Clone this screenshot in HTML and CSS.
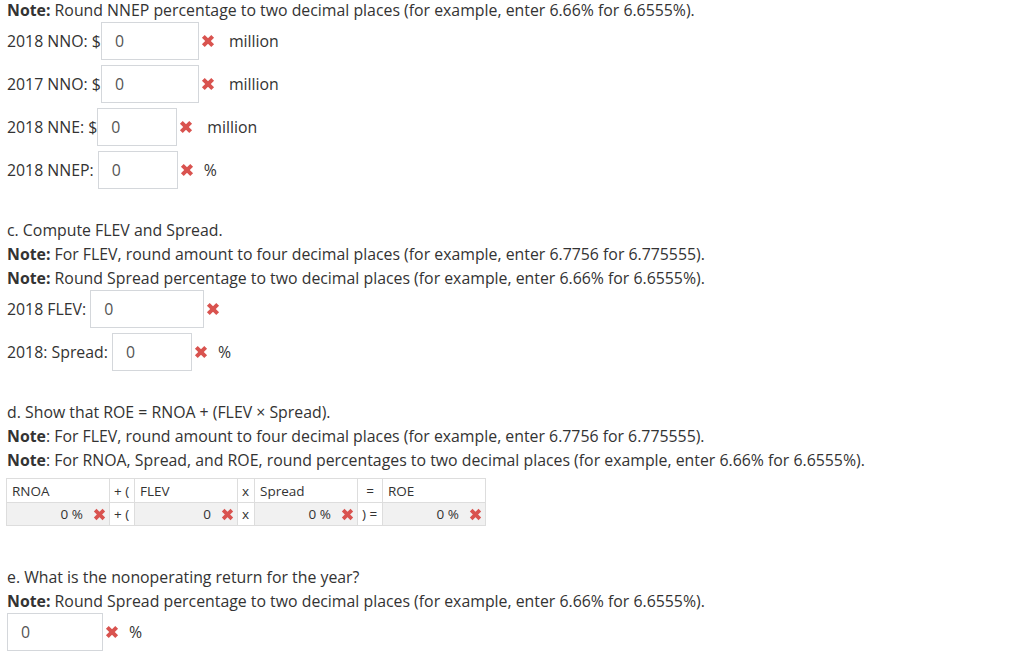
FILE: index.html
```html
<!DOCTYPE html>
<html lang="en">
<head>
    <meta charset="UTF-8">
    <title>Assignment</title>
    <link rel="stylesheet" href="styles.css">
</head>
<body>
    <div class="question">
        <p class="line first"><b>Note:</b> Round NNEP percentage to two decimal places (for example, enter 6.66% for 6.6555%).</p>

        <div class="row">2018 NNO: $<span class="field w98">0</span><svg class="wrong" viewBox="0 0 12 12"><path d="M2 2L10 10M10 2L2 10"/></svg><span class="unit million">million</span></div>
        <div class="row">2017 NNO: $<span class="field w98">0</span><svg class="wrong" viewBox="0 0 12 12"><path d="M2 2L10 10M10 2L2 10"/></svg><span class="unit million">million</span></div>
        <div class="row">2018 NNE: $<span class="field w80">0</span><svg class="wrong" viewBox="0 0 12 12"><path d="M2 2L10 10M10 2L2 10"/></svg><span class="unit million">million</span></div>
        <div class="row">2018 NNEP:&nbsp;<span class="field w80">0</span><svg class="wrong" viewBox="0 0 12 12"><path d="M2 2L10 10M10 2L2 10"/></svg><span class="unit">%</span></div>

        <div class="part">
            <p class="line">c. Compute FLEV and Spread.</p>
            <p class="line"><b>Note:</b> For FLEV, round amount to four decimal places (for example, enter 6.7756 for 6.775555).</p>
            <p class="line"><b>Note:</b> Round Spread percentage to two decimal places (for example, enter 6.66% for 6.6555%).</p>
        </div>
        <div class="row">2018 FLEV:&nbsp;<span class="field w114">0</span><svg class="wrong" viewBox="0 0 12 12"><path d="M2 2L10 10M10 2L2 10"/></svg></div>
        <div class="row">2018: Spread:&nbsp;<span class="field w80">0</span><svg class="wrong" viewBox="0 0 12 12"><path d="M2 2L10 10M10 2L2 10"/></svg><span class="unit">%</span></div>

        <div class="part">
            <p class="line">d. Show that ROE = RNOA + (FLEV × Spread).</p>
            <p class="line"><b>Note</b>: For FLEV, round amount to four decimal places (for example, enter 6.7756 for 6.775555).</p>
            <p class="line"><b>Note</b>: For RNOA, Spread, and ROE, round percentages to two decimal places (for example, enter 6.66% for 6.6555%).</p>
        </div>
        <table class="calc">
            <colgroup>
                <col class="c-val"><col class="c-op"><col class="c-val"><col class="c-x"><col class="c-val"><col class="c-op"><col class="c-val">
            </colgroup>
            <tr class="heads">
                <td>RNOA</td>
                <td class="op">+ (</td>
                <td>FLEV</td>
                <td class="op">x</td>
                <td>Spread</td>
                <td class="op eq">=</td>
                <td>ROE</td>
            </tr>
            <tr class="answers">
                <td class="val">0 %<svg class="wrong" viewBox="0 0 12 12"><path d="M2 2L10 10M10 2L2 10"/></svg></td>
                <td class="op">+ (</td>
                <td class="val">0<svg class="wrong" viewBox="0 0 12 12"><path d="M2 2L10 10M10 2L2 10"/></svg></td>
                <td class="op">x</td>
                <td class="val">0 %<svg class="wrong" viewBox="0 0 12 12"><path d="M2 2L10 10M10 2L2 10"/></svg></td>
                <td class="op">) =</td>
                <td class="val">0 %<svg class="wrong" viewBox="0 0 12 12"><path d="M2 2L10 10M10 2L2 10"/></svg></td>
            </tr>
        </table>

        <div class="part last">
            <p class="line">e. What is the nonoperating return for the year?</p>
            <p class="line"><b>Note:</b> Round Spread percentage to two decimal places (for example, enter 6.66% for 6.6555%).</p>
        </div>
        <div class="row"><span class="field w96">0</span><svg class="wrong" viewBox="0 0 12 12"><path d="M2 2L10 10M10 2L2 10"/></svg><span class="unit">%</span></div>
    </div>
</body>
</html>
```

FILE: styles.css
```css
body {
    margin: 0;
    background: #fff;
    font-family: "Open Sans", "Liberation Sans", sans-serif;
    font-size: 15.85px;
    color: #333;
}

.question {
    padding: 0 7px;
}

.line {
    margin: 0;
    line-height: 24px;
}

.line.first {
    margin-top: -2px;
}

b {
    font-weight: 700;
}

.row {
    display: flex;
    align-items: center;
    height: 38px;
    margin-bottom: 5px;
    white-space: pre;
}

.field {
    display: inline-flex;
    align-items: center;
    box-sizing: border-box;
    height: 38px;
    padding-left: 13px;
    border: 1px solid #d4d7db;
    color: #555;
    background: #fff;
}

.w80 { width: 80px; }
.w96 { width: 96px; }
.w98 { width: 98px; }
.w114 { width: 114px; }

.wrong {
    width: 14px;
    height: 14px;
    margin-left: 2px;
    fill: none;
    stroke: #d9534f;
    stroke-width: 3.4;
}

.unit {
    margin-left: 10px;
}

.unit.million {
    margin-left: 14px;
}

.part {
    margin-top: 29px;
}

.part.last {
    margin-top: 39px;
}

.calc {
    margin-top: 6px;
    margin-left: -1px;
    border-collapse: collapse;
    table-layout: fixed;
    width: 479px;
    font-size: 13.5px;
    color: #333;
}

.c-val { width: 103px; }
.c-op { width: 25px; }
.c-x { width: 17px; }

.calc td {
    border: 1px solid #dddddd;
    padding: 0 5px;
    line-height: 18px;
    white-space: nowrap;
    overflow: hidden;
}

.heads td {
    height: 23px;
}

.answers td {
    height: 22px;
}

.calc td.op {
    padding: 0 4px;
}

.calc td.eq {
    text-align: center;
}

.answers td.val {
    background: #f1f1f1;
    text-align: right;
    padding-right: 3px;
}

.answers .wrong {
    width: 13px;
    height: 13px;
    margin-left: 10px;
    vertical-align: -2px;
}
```
